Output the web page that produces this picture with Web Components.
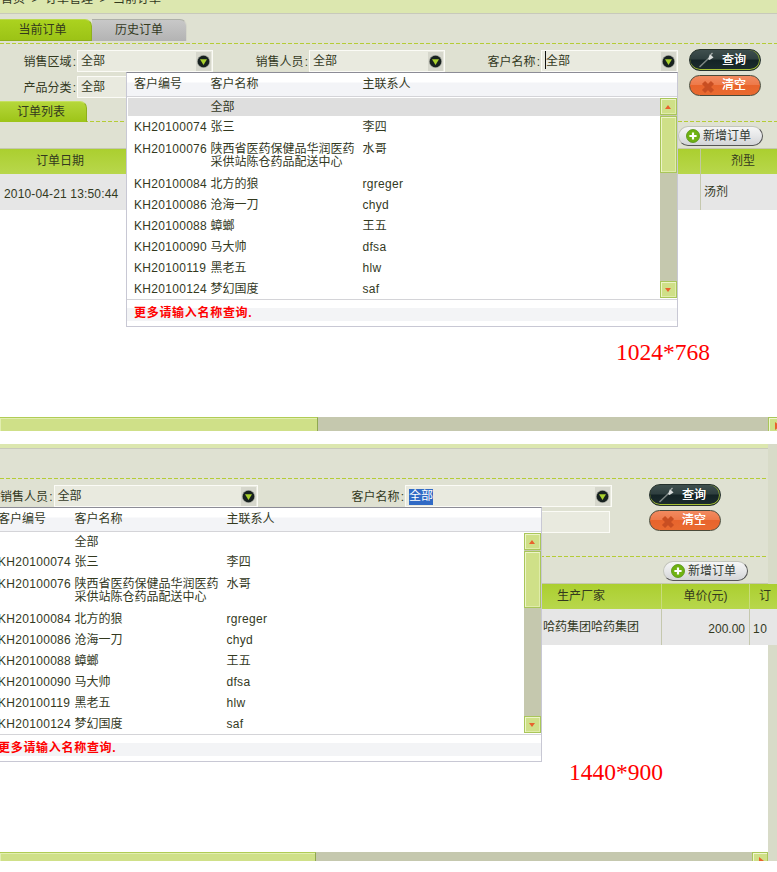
<!DOCTYPE html>
<html lang="zh"><head><meta charset="utf-8"><title>订单</title>
<style>
html,body{margin:0;padding:0;background:#fff;overflow:hidden}
body{font:12px/14px "Liberation Sans","Noto Sans CJK SC",sans-serif;color:#33391e}
</style></head>
<body>
<x-shot style="--h:431px;margin-bottom:13px">
  <x-crumb>首页|订单管理|当前订单</x-crumb>
  <x-tabs><x-tab active>当前订单</x-tab><x-tab>历史订单</x-tab></x-tabs>
  <x-filters style="--lw:678px;--gap:11px">
    <x-row>
      <x-field style="--fw:213px;--bw:136px" label="销售区域" value="全部" arrow></x-field>
      <x-field style="--fw:232px;--bw:136px" label="销售人员" value="全部" arrow></x-field>
      <x-field style="--fw:233px;--bw:137px" label="客户名称" value="全部" arrow state="cursor"></x-field>
    </x-row>
    <x-row>
      <x-field style="--fw:213px;--bw:136px" label="产品分类" value="全部" arrow></x-field>
    </x-row>
    <x-pill slot="actions" kind="query">查询</x-pill>
    <x-pill slot="actions" kind="clear">清空</x-pill>
  </x-filters>
  <x-subtabs>订单列表</x-subtabs>
  <x-toolbar style="--pr:14px"><x-add>新增订单</x-add></x-toolbar>
  <x-table style="--cols:120px 580px 85px;width:785px">
    <x-cell head>订单日期</x-cell><x-cell head></x-cell><x-cell head sep>剂型</x-cell>
    <x-cell class="d">2010-04-21 13:50:44</x-cell><x-cell></x-cell><x-cell sep align="left">汤剂</x-cell>
  </x-table>
  <x-blank style="--nl:616px;--nt:131px">1024*768</x-blank>
  <x-hscroll style="--tw:318px;width:784px;--hh:14px"></x-hscroll>
  <x-dropdown highlight style="left:126px;top:72px"></x-dropdown>
</x-shot>

<x-shot strip style="--h:417px">
  <x-crumb short></x-crumb>
  <x-tabs></x-tabs>
  <x-filters style="--lw:612px;--gap:37px">
    <x-row>
      <x-field style="--fw:258px;--bw:207px" label="销售人员" value="全部" arrow></x-field>
      <x-field style="--fw:354px;--bw:207px" label="客户名称" value="全部" arrow state="selected"></x-field>
    </x-row>
    <x-row>
      <x-field style="--fw:610px;--bw:205px"></x-field>
    </x-row>
    <x-pill slot="actions" kind="query">查询</x-pill>
    <x-pill slot="actions" kind="clear">清空</x-pill>
  </x-filters>
  <x-subtabs>订单列表</x-subtabs>
  <x-toolbar style="--pr:20px"><x-add>新增订单</x-add></x-toolbar>
  <x-table style="--cols:501px 160px 88px 40px;width:789px">
    <x-cell head></x-cell><x-cell head>生产厂家</x-cell><x-cell head lite>单价(元)</x-cell><x-cell head lite align="left-9">订</x-cell>
    <x-cell></x-cell><x-cell align="right-2">哈药集团哈药集团</x-cell><x-cell sep align="right"><span style="padding-top:3px">200.00</span></x-cell><x-cell sep align="left-3"><span style="letter-spacing:.5px;padding-top:3px">10</span></x-cell>
  </x-table>
  <x-blank style="--nl:569px;--nt:116px">1440*900</x-blank>
  <x-hscroll style="--tw:316px;--hh:9px"></x-hscroll>
  <x-dropdown style="left:-10px;top:63px"></x-dropdown>
</x-shot>

<script>
function def(name, css, render){
  customElements.define(name, class extends HTMLElement{
    connectedCallback(){
      if(this.shadowRoot) return;
      const r=this.attachShadow({mode:'open'});
      r.innerHTML='<style>'+css+'</style>'+(typeof render==='function'?render(this):render);
    }
  });
}
const DASH='repeating-linear-gradient(90deg,#b5cc36 0 4px,transparent 4px 6px)';

def('x-shot',`
  :host{display:block;position:relative;overflow:hidden;height:var(--h);width:777px}
  .wrap{display:flex;height:100%}
  .main{flex:1;min-width:0;display:flex;flex-direction:column}
  .strip{width:9px;flex:none;background:#d8dbc8}
  ::slotted(*){flex:none}
`, h=>`<div class="wrap"><div class="main"><slot></slot></div>${h.hasAttribute('strip')?'<div class="strip"></div>':''}</div>`);

def('x-crumb',`
  :host{display:flex;align-items:flex-end;gap:6px;box-sizing:border-box;height:14px;padding:0 0 8px 1px;background:#dce7af;border-bottom:1px solid #c8c9bb;overflow:hidden;line-height:12px}
  :host([short]){height:5px;padding:0}
  span{flex:none}
  i{font-style:normal;flex:none;width:8px;text-align:center}
`, h=>{const t=h.textContent.split('|').filter(Boolean);return t.map(s=>`<span>${s}</span>`).join('<i>&gt;</i>');});

def('x-tabs',`
  :host{display:flex;box-sizing:border-box;height:29px;padding-top:5px;background:#dfe1d2}
`,'<slot></slot>');

def('x-tab',`
  :host{display:block;box-sizing:border-box;width:95px;height:22px;margin-right:0;line-height:20px;text-align:center;font-size:12px;border-radius:0 7px 0 0;
    background:linear-gradient(#c8c8c8,#b3b3b3);border-top:1px solid #aeb0a8;border-right:1px solid #d5d6ca;color:#33391e}
  :host([active]){width:92px;padding-right:6px;background:linear-gradient(#abd21f,#9cc316);border-top:1px solid #b9d94a;border-right:1px solid #8fb01c;border-bottom:1px solid #8fb01c}
`,'<slot></slot>');

def('x-filters',`
  :host{display:flex;box-sizing:border-box;height:58px;padding-top:7px;background:#dfe1d2 ${DASH} top left/100% 1px no-repeat}
  .rows{width:var(--lw);flex:none;display:flex;flex-direction:column;gap:4px}
  .acts{margin:-1px 0 0 var(--gap);display:flex;flex-direction:column;gap:4px}
`,'<div class="rows"><slot></slot></div><div class="acts"><slot name="actions"></slot></div>');

def('x-row',`:host{display:flex;height:22px}`,'<slot></slot>');

def('x-field',`
  :host{display:flex;justify-content:flex-end;align-items:center;width:var(--fw);height:22px;flex:none}
  .lb{margin-right:1px;white-space:nowrap;position:relative;top:1px;display:flex}
  .lb b{font-weight:400;width:4.5px;text-align:right}
  .bx{position:relative;box-sizing:border-box;width:var(--bw);height:22px;border:1px solid #fbfbf6;background:#e9eadf;display:flex;align-items:flex-start;padding:3px 0 0 3px;line-height:14px}
  .v{position:relative}
  .cursor{margin-left:1px}
  .cursor::before{content:"";position:absolute;left:-1px;top:-3px;width:1px;height:18px;background:#111}
  .selected{background:#316ac5;color:#fff;padding:0 0 1px;height:15px}
  .ar{position:absolute;right:1px;top:1px;width:15px;height:19px;background:#d6d7cc;display:flex;align-items:center;justify-content:center}
`, h=>{
  const l=h.getAttribute('label'), v=h.getAttribute('value'), s=h.getAttribute('state')||'';
  return (l?`<span class="lb">${l}<b>:</b></span>`:'')+`<div class="bx">${v?`<span class="v ${s}">${v}</span>`:''}${h.hasAttribute('arrow')?`<span class="ar"><svg width="13" height="13" viewBox="0 0 13 13"><circle cx="6.5" cy="6.5" r="6" fill="#17211f"/><circle cx="6.5" cy="6.5" r="6.2" fill="none" stroke="#8c8f86" stroke-width=".5"/><path d="M3 4.2h7L6.5 10z" fill="#a9d02e"/></svg></span>`:''}</div>`;
});

def('x-pill',`
  :host{display:block;width:72px;height:21.5px;flex:none}
  .p{box-sizing:border-box;height:100%;border-radius:11px;display:flex;align-items:center;padding-left:32px;color:#fff;line-height:14px;position:relative;text-shadow:0 0 .6px #fff}
  .query{background:linear-gradient(#3f4f4e 0,#2f3f3f 45%,#142325 50%,#1c2c2e 100%);border:1px solid #24302c;box-shadow:inset 0 -1px 0 #a6bf33,inset -1px 0 0 #8aa533}
  .clear{background:linear-gradient(#f28a60 0,#ee7a4a 45%,#e8642c 50%,#e96a30 100%);border:1px solid #4a4a3a}
  svg{position:absolute;left:8px;top:2px}
`, h=>{
  const k=h.getAttribute('kind');
  const ic=k==='query'
   ?`<svg width="18" height="17" viewBox="0 0 18 17"><path d="M1.5 15L10.5 6.5" stroke="#7f8886" stroke-width="1.5" fill="none"/><path d="M10 7L12 2 15.5 5.5 11.5 8z" fill="#d8dcda"/><path d="M13 2.5L14.5 1" stroke="#aab0ae" stroke-width="1.2"/></svg>`
   :`<svg width="18" height="17" viewBox="0 0 18 17"><path d="M5.5 4.5L14.5 13.5M14.5 4.5L5.5 13.5" stroke="#c84e22" stroke-width="4.4" fill="none"/></svg>`;
  return `<div class="p ${k}">${ic}<slot></slot></div>`;
});

def('x-subtabs',`
  :host{display:block;height:21px;padding-top:0;background:#dfe1d2 ${DASH} bottom left/100% 1px no-repeat;position:relative}
  div{box-sizing:border-box;width:87px;height:21px;line-height:21px;padding-left:17px;border-radius:0 7px 0 0;background:linear-gradient(#b5d73a,#9dc418);border-right:1px solid #8fb01c;border-top:1px solid #c5e060}
`,'<div><slot></slot></div>');

def('x-toolbar',`
  :host{display:flex;justify-content:flex-end;box-sizing:border-box;height:26px;padding:4px var(--pr) 0 0;background:#dfe1d2}
`,'<slot></slot>');

def('x-add',`
  :host{display:block;box-sizing:border-box;width:85px;height:20px;border-radius:10px;background:linear-gradient(#f6f6f6,#e6e7e8 50%,#d3d4d7);border:1px solid #c3c5bb;border-right:1px solid #555;border-bottom:1px solid #555;position:relative;padding-left:24px;line-height:18px;color:#333a33}
  svg{position:absolute;left:7px;top:2px}
`,`<svg width="14" height="14" viewBox="0 0 14 14"><circle cx="7" cy="7" r="6.5" fill="#6fb212" stroke="#4f8f0f" stroke-width=".8"/><path d="M7 3.4v7.2M3.4 7h7.2" stroke="#fff" stroke-width="2.2"/></svg><slot></slot>`);

def('x-table',`
  :host{display:grid;grid-template-columns:var(--cols);grid-template-rows:25px 36px;border-top:1px solid #c5c8ae;background:#e6e6e6}
`,'<slot></slot>');

def('x-cell',`
  :host{display:flex;align-items:center;justify-content:center;box-sizing:border-box;background:#e6e6e6;white-space:nowrap;position:relative;overflow:hidden}
  :host([head]){background:linear-gradient(#abcf2f,#b8d74c);padding-bottom:2px}
  :host([sep]){border-left:1px solid #c5c8ae}
  :host([head][sep]){border-left:1px solid #c2c8a0}
  :host([lite]){border-left:1px solid #c9dc7c}
  :host([align="left"]){justify-content:flex-start;padding-left:3px}
  :host([align="left-3"]){justify-content:flex-start;padding-left:3px}
  :host([align="left-9"]){justify-content:flex-start;padding-left:9px}
  :host([align="right"]){justify-content:flex-end;padding-right:4px}
  :host([align="right-2"]){justify-content:flex-end;padding-right:22px}
  :host(.d){justify-content:flex-start;padding:3px 0 0 4px;letter-spacing:.15px}
`,'<slot></slot>');

def('x-blank',`
  :host{display:block;flex:1 1 0 !important;min-height:0;background:#fff;box-sizing:border-box;padding:var(--nt) 0 0 var(--nl);font:23.5px/22px "Liberation Serif",serif;color:#f00}
`,'<slot></slot>');

def('x-hscroll',`
  :host{display:flex;height:var(--hh);background:#c5c8ae;overflow:hidden}
  .t{width:var(--tw);box-sizing:border-box;height:16px;background:#cfe088;border-top:1px solid #b0cc55;border-right:1px solid #8fa850;box-shadow:inset 1px 1px 0 #e2eeb0;flex:none}
  .sp{flex:1}
  .b{width:16px;height:16px;box-sizing:border-box;flex:none;background:#cfe088;border:1px solid #a9c65a;box-shadow:inset 1px 1px 0 #f0f6d0;position:relative}
  .b::after{content:"";position:absolute;left:6px;top:4px;border-left:5px solid #e8622d;border-top:4px solid transparent;border-bottom:4px solid transparent}
`,'<div class="t"></div><div class="sp"></div><div class="b"></div>');

const ROWS=[
 ['KH20100074','张三','李四'],
 ['KH20100076','陕西省医药保健品华润医药采供站陈仓药品配送中心','水哥'],
 ['KH20100084','北方的狼','rgreger'],
 ['KH20100086','沧海一刀','chyd'],
 ['KH20100088','蟑螂','王五'],
 ['KH20100090','马大帅','dfsa'],
 ['KH20100119','黑老五','hlw'],
 ['KH20100124','梦幻国度','saf']
];
def('x-dropdown',`
  :host{position:absolute;display:flex;flex-direction:column;box-sizing:border-box;width:552px;height:255px;background:#fff;border:1px solid #c8c8d4;border-top:1px solid #8c8c96;line-height:13px;z-index:5}
  .hd{box-sizing:border-box;height:25px;flex:none;background:linear-gradient(#fff 0,#fff 9px,#f3f4f7 10px,#f3f4f7 23px,#d4d4d8 23px,#d4d4d8 24px,#fff 24px);display:grid;grid-template-columns:76.5px 152px 1fr;padding:3px 0 0 7px;line-height:16px}
  .body{display:flex;height:202px;flex:none;border-bottom:1px solid #d4d4d8;box-sizing:border-box;padding:0 0 0 1px}
  .list{flex:1;min-width:0}
  .r{display:grid;grid-template-columns:76.5px 152px 1fr;padding:5px 0 3px 6px;height:21px;box-sizing:border-box}
  .r span:nth-child(2){max-width:146px}
  .r.hi{background:#dedede}
  .r.tall{height:36px;padding-top:6px}
  .r.first{height:18px;padding-top:3px}
  .c{letter-spacing:.3px}
  .k{letter-spacing:.3px}
  .sb{width:17px;flex:none;background:#c5c8ae;display:flex;flex-direction:column;height:200px}
  .btn,.thumb{box-sizing:border-box;background:#cfe088;border:1px solid #a9c65a;box-shadow:inset 1px 1px 0 #edf4c8,inset -1px -1px 0 #e0ecaa;flex:none;position:relative}
  .btn{height:17px}
  .thumb{height:57px;margin-top:1px}
  .sp{flex:1}
  .btn::after{content:"";position:absolute;left:4px;top:6px;border-left:3.5px solid transparent;border-right:3.5px solid transparent;border-bottom:4px solid #e8622d}
  .btn.dn::after{border-bottom:0;border-top:4px solid #e8622d}
  .ft{flex:1;box-sizing:border-box;padding-top:7px;background:linear-gradient(#fff 0,#fff 8px,#f3f4f6 8px,#f3f4f6 21px,#fff 21px);padding-left:7px;line-height:13px;color:#f00;font-weight:700;letter-spacing:.7px}
`, h=>{
  const first=`<div class="r first ${h.hasAttribute('highlight')?'hi':''}"><span></span><span>全部</span><span></span></div>`;
  const rows=ROWS.map(r=>`<div class="r ${r[1].length>12?'tall':''}"><span class="c">${r[0]}</span><span>${r[1]}</span><span class="k">${r[2]}</span></div>`).join('');
  return `<div class="hd"><span>客户编号</span><span>客户名称</span><span>主联系人</span></div>
  <div class="body"><div class="list">${first}${rows}</div><div class="sb"><div class="btn"></div><div class="thumb"></div><div class="sp"></div><div class="btn dn"></div></div></div>
  <div class="ft">更多请输入名称查询.</div>`;
});
</script>
</body></html>
